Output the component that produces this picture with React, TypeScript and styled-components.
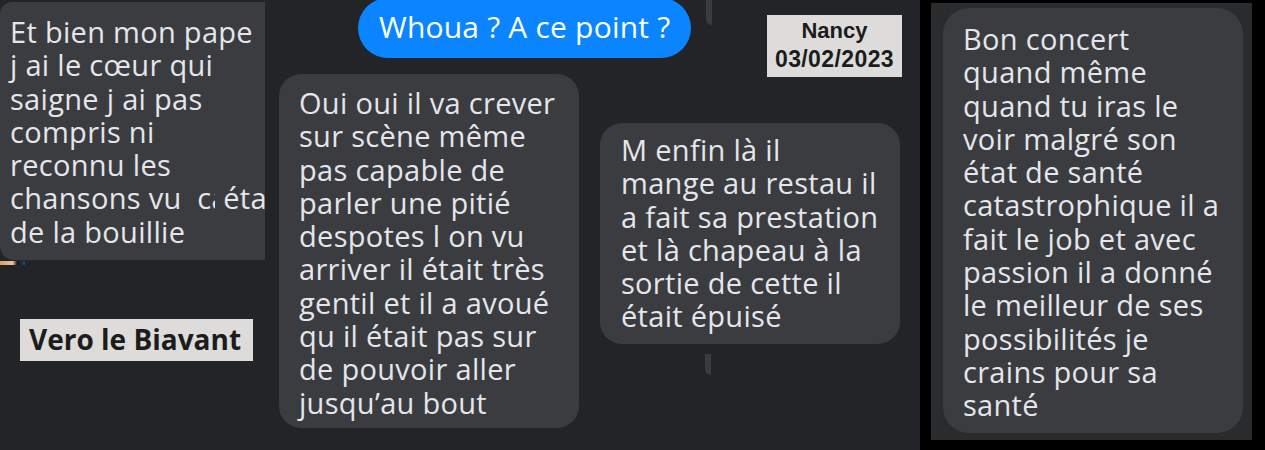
import React, { FC } from "react";
import styled, { createGlobalStyle } from "styled-components";

const GlobalStyle = createGlobalStyle`
  html, body {
    margin: 0;
    padding: 0;
    background: #232427;
  }
`;

type BubbleProps = {
  $w: number;
  $h: number;
  $pt: number;
  $pl: number;
  $radius?: string;
  $mt?: number;
  $ml?: number;
};

const Canvas = styled.div`
  position: relative;
  display: flex;
  width: 1265px;
  height: 450px;
  background: #232427;
  overflow: hidden;
  font-family: "Open Sans", "Noto Sans", sans-serif;
`;

const LeftCol = styled.div`
  display: flex;
  flex-direction: column;
  width: 279px;
  flex-shrink: 0;
`;

const CenterCol = styled.div`
  display: flex;
  flex-direction: column;
  width: 641px;
  flex-shrink: 0;
`;

const TopRow = styled.div`
  display: flex;
  align-items: flex-start;
  height: 74px;
`;

const BottomRow = styled.div`
  display: flex;
  align-items: flex-start;
`;

const Bubble = styled.div<BubbleProps>`
  box-sizing: border-box;
  width: ${(p) => p.$w}px;
  height: ${(p) => p.$h}px;
  margin-top: ${(p) => p.$mt ?? 0}px;
  margin-left: ${(p) => p.$ml ?? 0}px;
  padding: ${(p) => p.$pt}px 0 0 ${(p) => p.$pl}px;
  background: #3b3c3f;
  border-radius: ${(p) => p.$radius ?? "22px"};
  color: #e4e6eb;
  font-size: 29px;
  letter-spacing: 0.3px;
  line-height: 33.3px;
  overflow: hidden;
  flex-shrink: 0;
`;

const Line = styled.div`
  white-space: pre;
`;

const BlueBubble = styled.div`
  box-sizing: border-box;
  width: 333px;
  height: 60px;
  margin-top: -2px;
  margin-left: 79px;
  padding: 12px 0 0 21px;
  background: #0a85ff;
  border-radius: 30px;
  color: #ffffff;
  font-size: 30px;
  letter-spacing: 0.2px;
  line-height: 34px;
  white-space: pre;
  flex-shrink: 0;
`;

const Label = styled.div<{ $w: number; $h: number }>`
  box-sizing: border-box;
  width: ${(p) => p.$w}px;
  height: ${(p) => p.$h}px;
  background: #dddcda;
  color: #1c1c1c;
  flex-shrink: 0;
`;

const NancyLabel = styled(Label)`
  margin-top: 15px;
  margin-left: 76px;
  display: flex;
  flex-direction: column;
  align-items: center;
  padding-top: 1px;
  font-family: "Liberation Sans", Arial, sans-serif;
  font-weight: bold;
  font-size: 22px;
  line-height: 29px;
`;

const DateText = styled.span`
  font-size: 23px;
  letter-spacing: 0.4px;
`;

const VeroLabel = styled(Label)`
  margin-top: 59px;
  margin-left: 20px;
  padding: 0 0 0 9px;
  font-family: "Open Sans", sans-serif;
  font-weight: bold;
  font-size: 28px;
  line-height: 41px;
  white-space: pre;
`;

const RightFrame = styled.div`
  box-sizing: border-box;
  width: 345px;
  height: 450px;
  flex-shrink: 0;
  background: #000000;
  padding: 3px 13px 10px 11px;
`;

const Panel = styled.div`
  box-sizing: border-box;
  height: 437px;
  background: #2a2b2d;
  padding: 5px 0 0 12px;
`;

const Clip = styled.span`
  display: inline-block;
  width: 4px;
  overflow: hidden;
  vertical-align: bottom;
`;

/* leftover scraps of other screenshots lying on the collage */
const Scrap = styled.div<{ $x: number; $y: number; $h: number }>`
  position: absolute;
  left: ${(p) => p.$x}px;
  top: ${(p) => p.$y}px;
  width: 6px;
  height: ${(p) => p.$h}px;
  background: #3a3b3e;
  border-radius: 0 0 0 6px;
`;

const Avatar = styled.div`
  position: absolute;
  left: 0;
  top: 261px;
  width: 25px;
  height: 4px;
  background: linear-gradient(90deg, #d8a070, #f0c090 50%, #101418 70%, #1a4a7a);
`;

const Lines: FC<{ items: string[] }> = ({ items }) => (
  <>
    {items.map((t, i) => (
      <Line key={i}>{t}</Line>
    ))}
  </>
);

const App: FC = () => {
  return (
    <>
      <GlobalStyle />
      <Canvas>
        <LeftCol>
          <Bubble $w={265} $h={258} $mt={2} $pt={13} $pl={10} $radius="12px 0 0 14px">
            <Lines
              items={[
                "Et bien mon pape",
                "j ai le cœur qui",
                "saigne j ai pas",
                "compris ni",
                "reconnu les",
              ]}
            />
            <Line>
              chansons vu  c<Clip>a</Clip> était
            </Line>
            <Line>de la bouillie</Line>
          </Bubble>
          <VeroLabel $w={233} $h={42}>Vero le Biavant</VeroLabel>
        </LeftCol>

        <CenterCol>
          <TopRow>
            <BlueBubble>Whoua ? A ce point ?</BlueBubble>
            <NancyLabel $w={135} $h={62}>
              <span>Nancy</span>
              <DateText>03/02/2023</DateText>
            </NancyLabel>
          </TopRow>
          <BottomRow>
            <Bubble $w={300} $h={354} $pt={12} $pl={20}>
              <Lines
                items={[
                  "Oui oui il va crever",
                  "sur scène même",
                  "pas capable de",
                  "parler une pitié",
                  "despotes l on vu",
                  "arriver il était très",
                  "gentil et il a avoué",
                  "qu il était pas sur",
                  "de pouvoir aller",
                  "jusqu’au bout",
                ]}
              />
            </Bubble>
            <Bubble $w={300} $h={221} $mt={49} $ml={21} $pt={10} $pl={21}>
              <Lines
                items={[
                  "M enfin là il",
                  "mange au restau il",
                  "a fait sa prestation",
                  "et là chapeau à la",
                  "sortie de cette il",
                  "était épuisé",
                ]}
              />
            </Bubble>
          </BottomRow>
        </CenterCol>

        <RightFrame>
          <Panel>
            <Bubble $w={300} $h={425} $pt={14} $pl={20} $radius="26px">
              <Lines
                items={[
                  "Bon concert",
                  "quand même",
                  "quand tu iras le",
                  "voir malgré son",
                  "état de santé",
                  "catastrophique il a",
                  "fait le job et avec",
                  "passion il a donné",
                  "le meilleur de ses",
                  "possibilités je",
                  "crains pour sa",
                  "santé",
                ]}
              />
            </Bubble>
          </Panel>
        </RightFrame>

        <Scrap $x={706} $y={0} $h={25} />
        <Scrap $x={705} $y={354} $h={21} />
        <Avatar />
      </Canvas>
    </>
  );
};

export default App;
